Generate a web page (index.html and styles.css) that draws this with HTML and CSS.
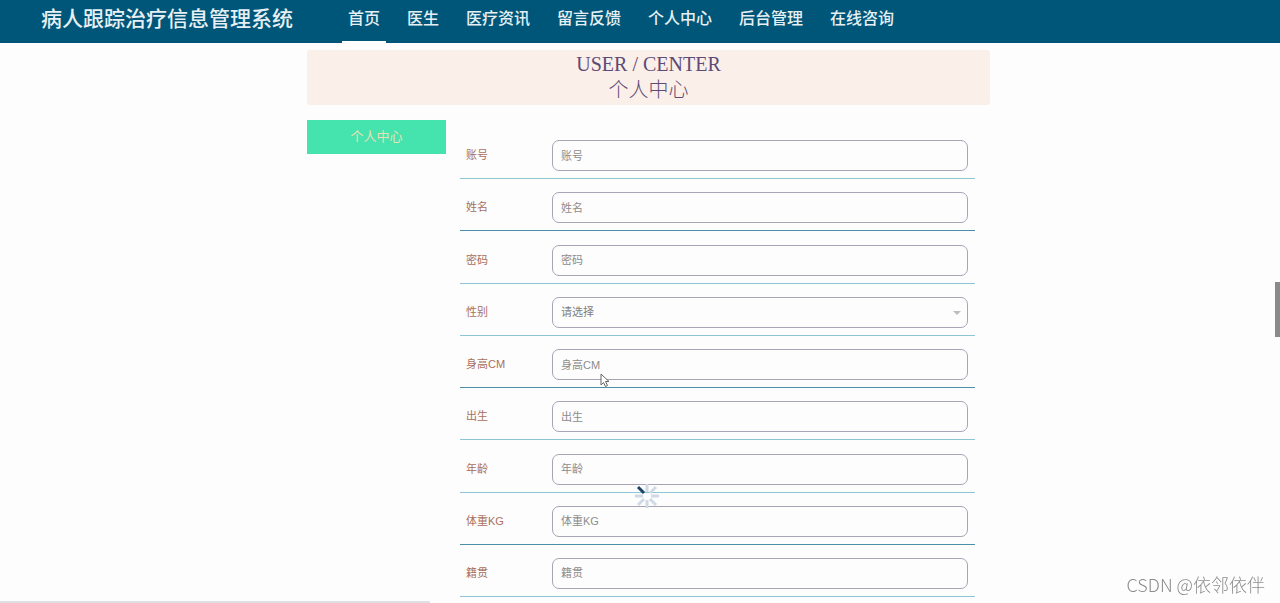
FILE: index.html
```html
<!DOCTYPE html>
<html lang="zh-CN">
<head>
<meta charset="utf-8">
<title>病人跟踪治疗信息管理系统</title>
<link rel="stylesheet" href="styles.css">
</head>
<body>
<header class="topbar">
  <h1 class="brand">病人跟踪治疗信息管理系统</h1>
  <nav class="nav">
    <a class="nav-link active" href="#">首页</a>
    <a class="nav-link" href="#">医生</a>
    <a class="nav-link" href="#">医疗资讯</a>
    <a class="nav-link" href="#">留言反馈</a>
    <a class="nav-link" href="#">个人中心</a>
    <a class="nav-link" href="#">后台管理</a>
    <a class="nav-link" href="#">在线咨询</a>
  </nav>
</header>
<main class="page">
  <div class="banner">
    <p class="banner-line">USER / CENTER</p>
    <h2 class="banner-line">个人中心</h2>
  </div>
  <div class="columns">
    <aside class="side"><a class="side-link" href="#">个人中心</a></aside>
    <form class="form">
      <div class="row"><label class="label" for="account">账号</label><input class="control" id="account" type="text" placeholder="账号"></div>
      <div class="row dark"><label class="label" for="name">姓名</label><input class="control" id="name" type="text" placeholder="姓名"></div>
      <div class="row"><label class="label" for="password">密码</label><input class="control" id="password" type="password" placeholder="密码"></div>
      <div class="row"><label class="label" for="gender">性别</label>
        <div class="select-wrap">
          <select class="control" id="gender"><option>请选择</option><option>男</option><option>女</option></select>
          <svg class="arrow" viewBox="0 0 8 4" width="8" height="4" aria-hidden="true"><path d="M0 0h8L4 4z" fill="#bdbdbd"/></svg>
        </div>
      </div>
      <div class="row dark"><label class="label" for="height">身高CM</label><input class="control" id="height" type="text" placeholder="身高CM"></div>
      <div class="row"><label class="label" for="birth">出生</label><input class="control" id="birth" type="text" placeholder="出生"></div>
      <div class="row"><label class="label" for="age">年龄</label><input class="control" id="age" type="text" placeholder="年龄"></div>
      <div class="row dark"><label class="label" for="weight">体重KG</label><input class="control" id="weight" type="text" placeholder="体重KG"></div>
      <div class="row"><label class="label" for="origin">籍贯</label><input class="control" id="origin" type="text" placeholder="籍贯"></div>
    </form>
  </div>
</main>
<svg class="spinner" viewBox="-13 -13 26 26" width="26" height="26" aria-hidden="true">
  <g stroke="#d0dae6" stroke-width="3">
    <path d="M0-4V-12M0 4V12M4 0H12M-4 0H-12M3-3 9-9M3 3 9 9M-3 3-9 9"/>
    <path d="M-3-3-9-9" stroke="#1d4468"/>
  </g>
</svg>
<svg class="pointer" viewBox="0 0 10 14" width="10" height="14" aria-hidden="true"><path d="M1 1v11l2.500-2.500 2 4 2-1-2-4H9z" fill="#fff" stroke="#666"/></svg>
<div class="scroll-thumb"></div>
<div class="status-edge"></div>
<div class="watermark">CSDN @依邻依伴</div>
</body>
</html>
```
FILE: styles.css
```css
* {
  box-sizing: border-box;
}

body {
  margin: 0;
  background: #fdfdfd;
  font-family: "Liberation Sans", "Noto Sans CJK SC", sans-serif;
  font-size: 11px;
}

a {
  color: inherit;
  text-decoration: none;
}

.topbar {
  display: flex;
  gap: 49px;
  padding-left: 41px;
  background: #005678;
  color: #e6f0f4;
}

.brand {
  margin: 0;
  font-size: 21px;
  font-weight: 500;
  line-height: 37px;
}

.nav {
  display: flex;
  gap: 15px;
}

.nav-link {
  padding: 0 6px 4px;
  border-bottom: 2px solid transparent;
  font-size: 16px;
  font-weight: 500;
  line-height: 37px;
}

.nav-link.active {
  border-bottom-color: #fff;
}

.page {
  max-width: 700px;
  margin: 7px auto 0;
  padding-left: 17px;
}

.banner {
  padding: 1px 0 2px;
  border-radius: 3px;
  background: #fbefe9;
  color: #5f4a75;
  text-align: center;
}

.banner-line {
  margin: 0;
  font-family: "Liberation Serif", "Noto Sans CJK SC", serif;
  font-size: 20px;
  font-weight: 300;
  line-height: 26px;
}

.columns {
  display: flex;
  align-items: flex-start;
  gap: 14px;
  padding: 15px 15px 0 0;
}

.side {
  flex: 0 0 139px;
}

.side-link {
  display: block;
  background: #45e3ae;
  color: #e9e0b4;
  font-size: 13px;
  line-height: 34px;
  text-align: center;
}

.form {
  display: grid;
  flex: 1;
  grid-auto-rows: 1fr;
  min-height: 470px;
  margin-top: 7px;
}

.row {
  display: flex;
  align-items: flex-end;
  padding: 0 7px 7px 6px;
  border-bottom: 1px solid #8cc5d3;
}

.row.dark {
  border-bottom-color: #4a8fa5;
}

.label {
  flex: 0 0 86px;
  color: #a8705c;
  line-height: 31px;
}

.control {
  flex: 1;
  width: 100%;
  height: 31px;
  min-width: 0;
  padding: 0 8px;
  border: 1px solid #aaa3b6;
  border-radius: 7px;
  background: #fdfdfd;
  color: #808080;
  font: inherit;
  appearance: none;
}

.control::placeholder {
  color: #8c8c8c;
}

.select-wrap {
  position: relative;
  display: flex;
  flex: 1;
}

.arrow {
  position: absolute;
  top: 14px;
  right: 7px;
}

.spinner {
  position: absolute;
  top: 483px;
  left: 634px;
}

.pointer {
  position: absolute;
  top: 373px;
  left: 600px;
}

.scroll-thumb {
  position: fixed;
  top: 282px;
  right: 0;
  width: 5px;
  height: 55px;
  background: #8a8a8a;
}

.status-edge {
  position: fixed;
  bottom: 0;
  left: 0;
  width: 430px;
  height: 2px;
  background: #dce1e5;
}

.watermark {
  position: fixed;
  right: 15px;
  bottom: 6px;
  color: #8c8c8c;
  font-family: "Noto Sans CJK SC", sans-serif;
  font-size: 18px;
  font-weight: 300;
  line-height: 26px;
}
```
